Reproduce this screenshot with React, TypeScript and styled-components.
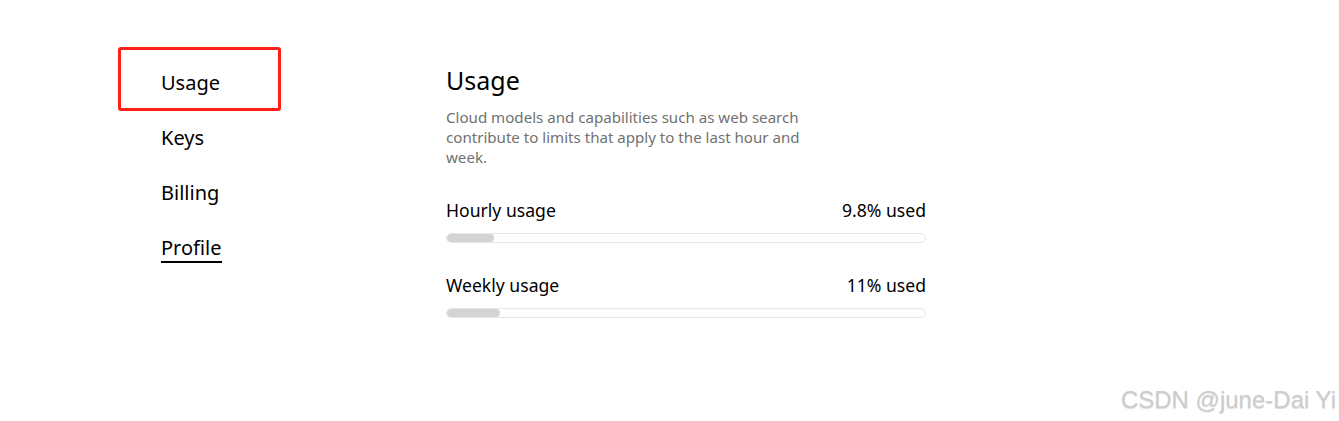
import React from "react";
import styled, { createGlobalStyle } from "styled-components";

const Global = createGlobalStyle`
  html, body { margin: 0; padding: 0; background: #fff; }
  body { font-family: "Noto Sans", "Open Sans", sans-serif; color: #000; }
`;

const Page = styled.div`
  position: relative;
  width: 1339px;
  height: 421px;
  overflow: hidden;
  display: flex;
  padding-left: 161px;
  box-sizing: border-box;
`;

const Nav = styled.nav`
  width: 285px;
  padding-top: 55px;
  display: flex;
  flex-direction: column;
`;

const NavItem = styled.div<{ $underline?: boolean; $highlight?: boolean }>`
  position: relative;
  height: 55px;
  line-height: 55px;
  font-size: 20px;
  color: #000;
  span {
    display: inline-block;
    line-height: 26px;
    border-bottom: 2px solid ${(p) => (p.$underline ? "#000" : "transparent")};
  }
  ${(p) =>
    p.$highlight &&
    `
    &::after {
      content: "";
      position: absolute;
      left: -43px;
      top: -8px;
      width: 157px;
      height: 58px;
      border: 3px solid #ff2015;
      border-radius: 3px;
    }
  `}
`;

const Main = styled.main`
  width: 480px;
  padding-top: 65px;
  display: flex;
  flex-direction: column;
`;

const Title = styled.h1`
  margin: 0;
  font-size: 25px;
  font-weight: 400;
  line-height: 31px;
`;

const Desc = styled.p`
  margin: 11px 0 0;
  max-width: 362px;
  font-size: 15.1px;
  line-height: 20px;
  color: #717171;
`;

const Meters = styled.div`
  margin-top: 31px;
  display: flex;
  flex-direction: column;
  gap: 30px;
`;

const Meter = styled.div`
  display: flex;
  flex-direction: column;
  gap: 11px;
`;

const MeterHead = styled.div`
  display: flex;
  justify-content: space-between;
  font-size: 17.6px;
  line-height: 24px;
`;

const Track = styled.div`
  height: 10px;
  box-sizing: border-box;
  border: 1px solid #e6e6e6;
  border-radius: 999px;
  overflow: hidden;
`;

const Fill = styled.div`
  height: 100%;
  background: #d4d4d4;
  border-radius: 999px;
`;

const Watermark = styled.div`
  position: absolute;
  right: 3px;
  bottom: 7px;
  font-family: "Liberation Sans", Arial, sans-serif;
  font-size: 24px;
  color: #cdcdcd;
  text-shadow: 0 1px 1px rgba(0, 0, 0, 0.14);
`;

const meters = [
  { label: "Hourly usage", value: "9.8% used", pct: 9.8 },
  { label: "Weekly usage", value: "11% used", pct: 11 },
];

export default function App() {
  return (
    <>
      <Global />
      <Page>
        <Nav>
          <NavItem $highlight>
            <span>Usage</span>
          </NavItem>
          <NavItem>
            <span>Keys</span>
          </NavItem>
          <NavItem>
            <span>Billing</span>
          </NavItem>
          <NavItem $underline>
            <span>Profile</span>
          </NavItem>
        </Nav>
        <Main>
          <Title>Usage</Title>
          <Desc>
            Cloud models and capabilities such as web search contribute to
            limits that apply to the last hour and week.
          </Desc>
          <Meters>
            {meters.map((m) => (
              <Meter key={m.label}>
                <MeterHead>
                  <span>{m.label}</span>
                  <span>{m.value}</span>
                </MeterHead>
                <Track>
                  <Fill style={{ width: `${m.pct}%` }} />
                </Track>
              </Meter>
            ))}
          </Meters>
        </Main>
        <Watermark>CSDN @june-Dai Yi</Watermark>
      </Page>
    </>
  );
}
